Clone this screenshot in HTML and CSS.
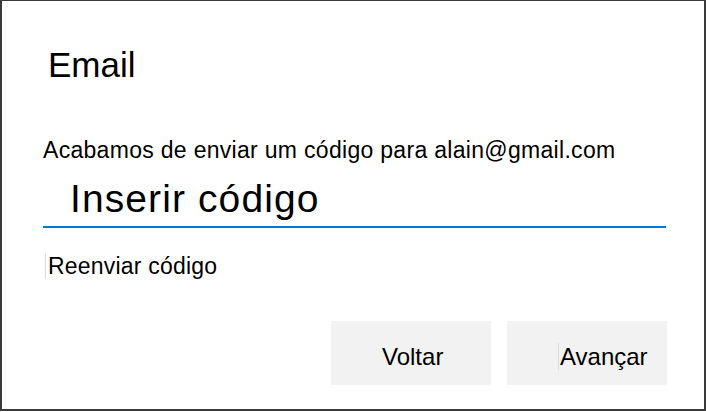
FILE: index.html
```html
<!DOCTYPE html>
<html lang="pt">
<head>
<meta charset="utf-8">
<title>Email</title>
<link rel="stylesheet" href="styles.css">
</head>
<body>
<div class="frame">
  <h1 class="title">Email</h1>
  <p class="desc">Acabamos de enviar um código para alain@gmail.com</p>
  <div class="field"><span class="placeholder">Inserir código</span></div>
  <div class="resend"><span class="caret-mark">Reenviar código</span></div>
  <div class="actions">
    <button class="btn">Voltar</button>
    <button class="btn"><span class="caret-mark">Avançar</span></button>
  </div>
</div>
</body>
</html>
```
FILE: styles.css
```css
html, body {
  margin: 0;
  padding: 0;
  background: #fff;
}
body {
  font-family: "Liberation Sans", Arial, sans-serif;
  color: #000;
}
.frame {
  box-sizing: border-box;
  width: 706px;
  height: 411px;
  border-style: solid;
  border-color: #3a3a3a;
  border-width: 1px 2px 2px 2px;
  padding: 44px 37px 0 39px;
  display: flex;
  flex-direction: column;
}
.title {
  margin: 0 0 0 7px;
  font-size: 35px;
  line-height: 40px;
  font-weight: normal;
}
.desc {
  margin: 53px 0 0 2px;
  font-size: 23px;
  line-height: 24px;
  letter-spacing: 0.3px;
  white-space: nowrap;
}
.field {
  margin: 15px 1px 0 2px;
  padding: 0 0 5px 27px;
  border-bottom: 2px solid #0078d4;
  font-size: 39px;
  line-height: 44px;
  letter-spacing: 1.1px;
}
.resend {
  margin: 26px 0 0 4px;
  font-size: 23px;
  line-height: 24px;
  letter-spacing: 0.2px;
}
.caret-mark {
  border-left: 1px solid #dcdcdc;
  padding-left: 1px;
}
.resend .caret-mark {
  padding-left: 2px;
}
.actions {
  margin-top: 43px;
  display: flex;
  justify-content: flex-end;
  gap: 16px;
}
.btn {
  width: 160px;
  height: 64px;
  border: none;
  background: #f2f2f2;
  font-family: "Liberation Sans", Arial, sans-serif;
  font-size: 24px;
  color: #000;
  text-align: left;
  padding: 7px 0 0 51px;
}
```
